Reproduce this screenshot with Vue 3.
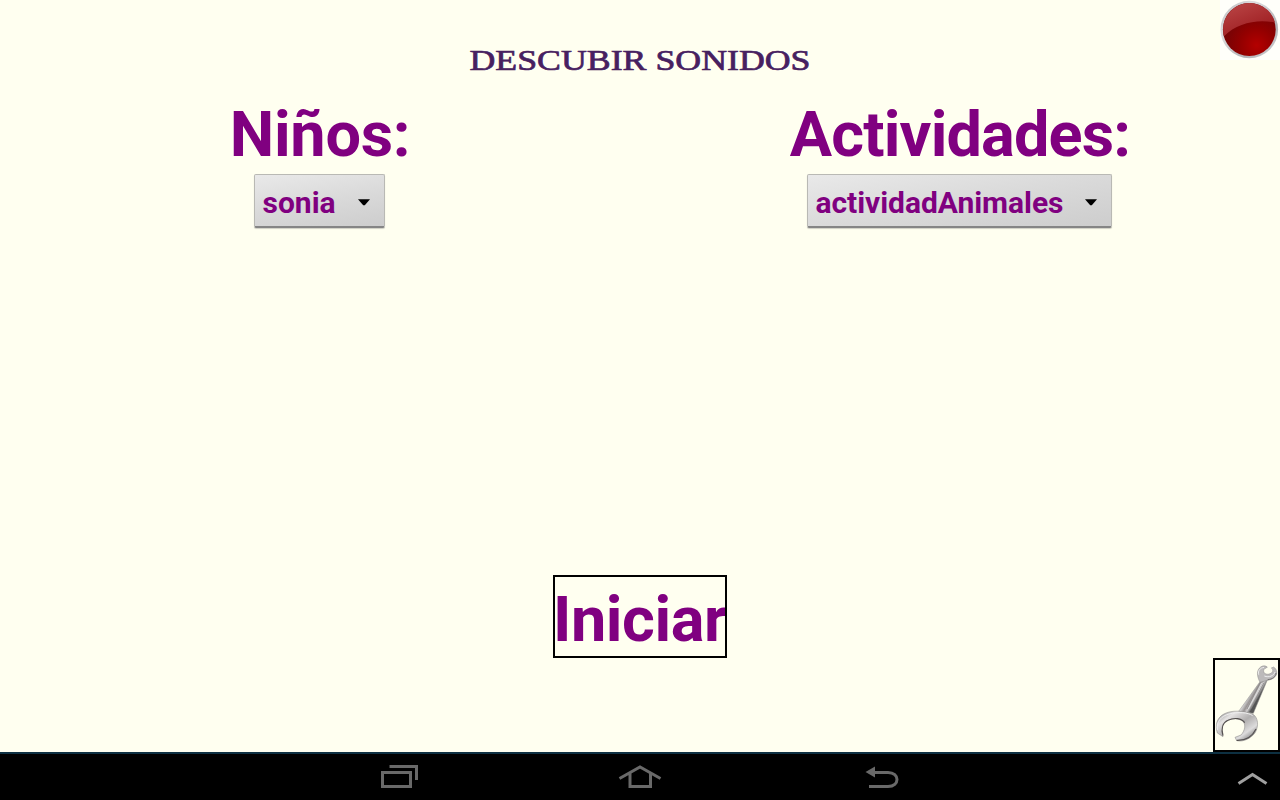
<script setup>
const groups = [
  { label: 'Niños:', value: 'sonia', kind: 'kids' },
  { label: 'Actividades:', value: 'actividadAnimales', kind: 'activities' },
]
</script>

<template>
  <div class="screen">
    <main class="stage">
      <svg class="title" width="344" height="46" viewBox="0 0 344 46">
        <text x="1.5" y="36" textLength="341" lengthAdjust="spacingAndGlyphs">DESCUBIR SONIDOS</text>
      </svg>

      <div class="orb">
        <svg width="60" height="60" viewBox="0 0 60 60">
          <defs>
            <linearGradient id="rim" x1="0" y1="0" x2="1" y2="1">
              <stop offset="0" stop-color="#b4b4b8" /><stop offset=".3" stop-color="#dedee0" />
              <stop offset=".7" stop-color="#b2b2b6" /><stop offset="1" stop-color="#d8d8da" />
            </linearGradient>
            <radialGradient id="red" cx=".64" cy=".8" r=".65">
              <stop offset="0" stop-color="#b40000" /><stop offset=".5" stop-color="#920000" /><stop offset="1" stop-color="#720406" />
            </radialGradient>
            <linearGradient id="gloss" x1="0" y1="0" x2=".6" y2="1">
              <stop offset="0" stop-color="#bc4848" /><stop offset="1" stop-color="#9c1b1f" />
            </linearGradient>
          </defs>
          <rect width="60" height="60" fill="#fffffa" />
          <circle cx="29.3" cy="29.5" r="28.8" fill="url(#rim)" />
          <circle cx="29.3" cy="29.5" r="26.4" fill="url(#red)" />
          <path d="M4 36.3A26.4 26.4 0 1 1 55 22.5C37 19 17 23 4 36.3Z" fill="url(#gloss)" />
        </svg>
      </div>

      <section class="groups">
        <div v-for="g in groups" :key="g.kind" class="group">
          <h2 :class="g.kind"><span>{{ g.label }}</span></h2>
          <button class="spinner" :class="g.kind">
            <span>{{ g.value }}</span>
            <svg width="12" height="7" viewBox="0 0 12 7"><path d="M0 .3H12L6.8 6.2H5.2Z" /></svg>
          </button>
        </div>
      </section>

      <button class="start"><span>Iniciar</span></button>

      <button class="tool">
        <svg width="67" height="94" viewBox="24 24 201 282">
          <defs>
            <linearGradient id="shaft" gradientUnits="userSpaceOnUse" x1="123" y1="129" x2="157" y2="149">
              <stop offset="0" stop-color="#777" /><stop offset=".2" stop-color="#eee" /><stop offset=".42" stop-color="#b5b3b3" />
              <stop offset=".55" stop-color="#979292" /><stop offset=".75" stop-color="#d2d0d0" /><stop offset="1" stop-color="#555" />
            </linearGradient>
            <linearGradient id="head" x1="0" y1="0" x2="1" y2="1">
              <stop offset="0" stop-color="#787878" /><stop offset=".25" stop-color="#e5e3e3" /><stop offset=".5" stop-color="#b1afaf" />
              <stop offset=".72" stop-color="#dddcdc" /><stop offset="1" stop-color="#444" />
            </linearGradient>
          </defs>
          <path d="M165 95L187 90L145 190L101 184Z" fill="url(#shaft)" stroke="#8b8989" stroke-width="1.5" />
          <path d="M165 97C155 78 154 60 167 51C173 46 182 47 187 51L184 54C176 56 173 63 179 70C188 76 200 71 203 64C204 59 202 55 199 54L206 51C217 58 218 73 210 80C204 87 195 90 187 91Z" fill="#bcbaba" stroke="#8b8989" stroke-width="1.5" />
          <path d="M161 74C158 62 165 54 177 52M178 78C192 84 207 77 210 66" fill="none" stroke="#eee" stroke-width="3" />
          <path d="M188 89C202 88 213 80 213 69" fill="none" stroke="#737171" stroke-width="3" />
          <path d="M37 249C29 225 36 204 55 193C79 178 119 183 143 192C161 203 161 229 151 247C140 264 116 277 95 272L90 262L108 255C119 243 124 224 113 213C96 202 68 205 55 222C48 235 51 249 54 260Z" fill="url(#head)" stroke="#858383" stroke-width="1.5" />
          <path d="M37 240C34 214 49 198 72 192C98 185 130 187 143 197" fill="none" stroke="#eee" stroke-width="3" />
          <path d="M54 257C48 236 53 218 69 211C87 202 110 204 119 218M95 271C120 272 142 260 153 237" fill="none" stroke="#555151" stroke-width="3.5" />
          <path d="M165 99L126 177M177 98L137 176" fill="none" stroke="#8b8989" stroke-width="2.5" />
          <path d="M170 99L130 177" fill="none" stroke="#ddd" stroke-width="3" />
        </svg>
      </button>
    </main>

    <nav class="navbar">
      <svg width="1280" height="46" viewBox="0 754 1280 46" fill="none" stroke="#696969">
        <path d="M382.5 772.5H410.5V786.5H382.5Z" stroke-width="3" />
        <path d="M389.5 766.5H416.5V780" stroke-width="3" />
        <path d="M619.5 778.5L640 767L660.5 778.5M630 773V786.5H650.5V773" stroke-width="3" />
        <path d="M869 786.5H888C900 786.5 900 772.5 888 772.5H874" stroke-width="3" />
        <path d="M865.5 772L875 766.5V777.5Z" fill="#696969" stroke="none" />
        <path d="M1238.5 783.5L1252.5 774.5L1266.5 783.5" stroke="#a0a0a0" stroke-width="3" />
      </svg>
    </nav>
  </div>
</template>

<style>
body { margin: 0; }
</style>

<style scoped>
.screen {
  width: 1280px;
  height: 800px;
  display: flex;
  flex-direction: column;
  overflow: hidden;
  font-family: Roboto, sans-serif;
  font-weight: 700;
  color: #800080;
}
.stage {
  position: relative;
  height: 752px;
  background: #fffff0;
  display: flex;
  flex-direction: column;
  align-items: center;
}
svg { display: block; flex: none; }
button {
  box-sizing: border-box;
  padding: 0;
  margin: 0;
  font: inherit;
  color: inherit;
  border-radius: 0;
}
.title { margin-top: 34px; overflow: visible; }
.title text {
  font: 400 30px "Liberation Serif", serif;
  fill: #472060;
  stroke: #472060;
  stroke-width: .7px;
}
.orb { position: absolute; top: 0; right: 0; }
.groups {
  width: 1280px;
  margin-top: 18px;
  display: grid;
  grid-template-columns: 1fr 1fr;
}
.group { display: flex; flex-direction: column; align-items: center; }
h2 {
  height: 76px;
  margin: 0;
  font-size: 63px;
  line-height: 73px;
  font-weight: 700;
}
h2.kids { letter-spacing: -.3px; }
h2.activities { letter-spacing: -.85px; }
.spinner {
  height: 54px;
  display: flex;
  align-items: center;
  justify-content: space-between;
  padding: 4px 14px 0 8px;
  margin-right: 2px;
  border: 1px solid #b9b9b4;
  border-bottom: 2px solid #858585;
  border-radius: 2px;
  background: linear-gradient(170deg, #e9e9e9, #dadada 50%, #cdcdcd);
  box-shadow: 0 1px 1px #d0d0c5;
  font-size: 30px;
  line-height: 36px;
}
.spinner svg { fill: #000; }
.spinner.kids { width: 131px; }
.spinner.activities { width: 305px; letter-spacing: -.05px; }
.start {
  width: 174px;
  height: 83px;
  margin-top: 347px;
  border: 2px solid #000;
  background: transparent;
  overflow: hidden;
  font-size: 63px;
  line-height: 79px;
  text-align: left;
  white-space: nowrap;
}
.start span {
  display: block;
  margin: 3px 0 0 -2px;
  letter-spacing: -.45px;
}
.tool {
  position: absolute;
  right: 0;
  bottom: 0;
  width: 67px;
  height: 94px;
  border: 2px solid #000;
  background: transparent;
  overflow: hidden;
}
.tool svg { margin: -2px; }
.navbar {
  box-sizing: border-box;
  height: 48px;
  background: #000;
  border-top: 2px solid #0d3042;
}
</style>
